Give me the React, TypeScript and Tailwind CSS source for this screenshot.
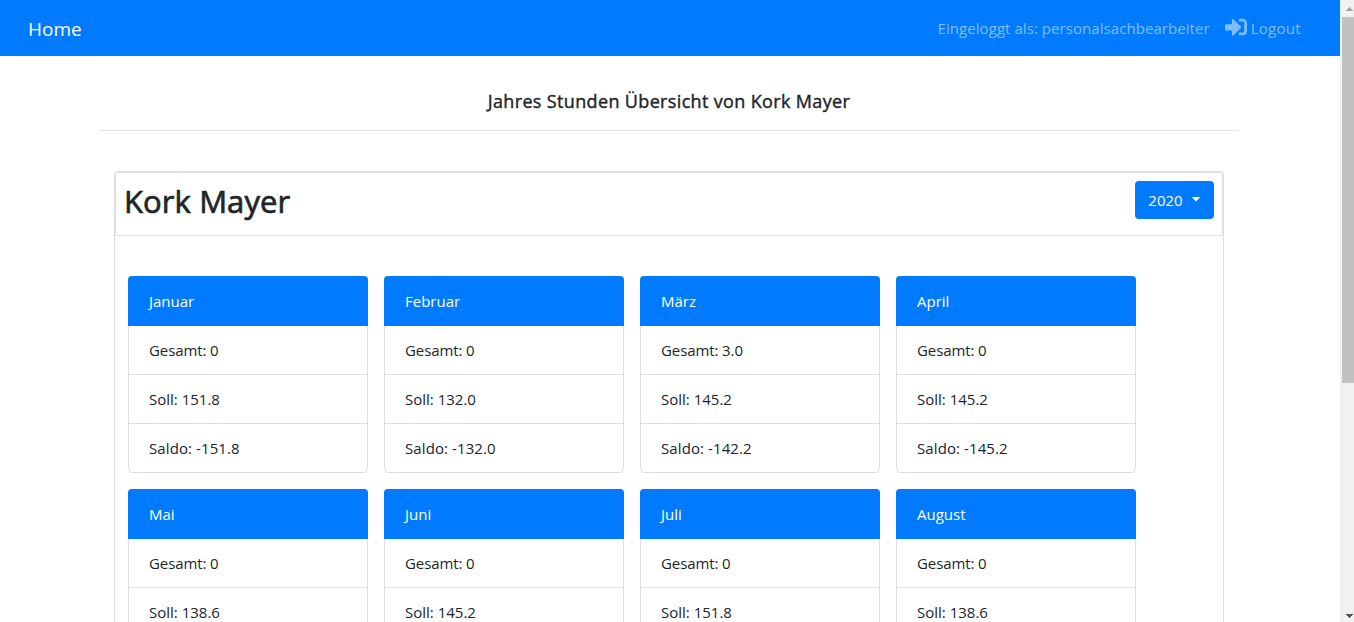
import { FaSignInAlt } from "react-icons/fa";

type Month = { name: string; total: string; target: string; balance: string };

const months: Month[] = [
  { name: "Januar", total: "0", target: "151.8", balance: "-151.8" },
  { name: "Februar", total: "0", target: "132.0", balance: "-132.0" },
  { name: "März", total: "3.0", target: "145.2", balance: "-142.2" },
  { name: "April", total: "0", target: "145.2", balance: "-145.2" },
  { name: "Mai", total: "0", target: "138.6", balance: "-138.6" },
  { name: "Juni", total: "0", target: "145.2", balance: "-145.2" },
  { name: "Juli", total: "0", target: "151.8", balance: "-151.8" },
  { name: "August", total: "0", target: "138.6", balance: "-138.6" },
];

function Navbar() {
  return (
    <nav className="flex h-14 items-center justify-between bg-[#007bff] pr-[39px] pl-7">
      <a className="pt-px text-[19px] leading-[30px] text-white" href="#">
        Home
      </a>
      <div className="flex items-center text-[15px] leading-6 text-white/50">
        <span className="mr-[15px] tracking-[0.06px]">Eingeloggt als: personalsachbearbeiter</span>
        <a className="flex items-center gap-1" href="#">
          <FaSignInAlt className="mb-0.5 size-[22px]" />
          <span className="tracking-[0.3px]">Logout</span>
        </a>
      </div>
    </nav>
  );
}

function MonthCard({ month }: { month: Month }) {
  return (
    <section className="h-[197px] w-60 rounded border border-[#dfdfdf] text-[15px] leading-6 text-[#212529]">
      <h2 className="-mx-px -mt-px h-[50px] rounded-t bg-[#007bff] px-[21px] py-[13px] text-white">{month.name}</h2>
      <ul className="divide-y divide-[#dfdfdf]">
        <li className="px-5 py-3 tracking-[-0.1px]">Gesamt: {month.total}</li>
        <li className="px-5 py-3">Soll: {month.target}</li>
        <li className="px-5 py-3 tracking-[0.1px]">Saldo: {month.balance}</li>
      </ul>
    </section>
  );
}

function Scrollbar() {
  return (
    <div className="flex h-full w-3.5 shrink-0 flex-col items-end bg-[#f1f1f1]">
      <div className="flex h-[17px] w-3 items-center justify-center pl-0.5">
        <svg width="7" height="4" viewBox="0 0 7 4" fill="#a3a3a3" shapeRendering="crispEdges">
          <path d="M3 0h1v1h1v1h1v1h1v1H0V3h1V2h1V1h1z" />
        </svg>
      </div>
      <div className="h-[366px] w-3 bg-[#c1c1c1]" />
      <div className="mt-auto flex h-[13px] w-3 items-center justify-center pt-px pl-0.5">
        <svg width="7" height="4" viewBox="0 0 7 4" fill="#505050" shapeRendering="crispEdges">
          <path d="M0 0h7v1H6v1H5v1H4v1H3V3H2V2H1V1H0z" />
        </svg>
      </div>
    </div>
  );
}

export default function App() {
  return (
    <div className="flex h-[622px] w-[1354px] overflow-hidden bg-white font-['Open_Sans','Noto_Sans',sans-serif] text-[#212529]">
      <div className="min-w-0 flex-1">
        <Navbar />
        <main className="ml-[99px] w-[1140px]">
          <h1 className="flex h-[75px] items-center justify-center border-b border-[#e5e5e5] pt-4 text-[18px] leading-6 tracking-[0.35px] [-webkit-text-stroke:0.4px]">
            Jahres Stunden Übersicht von Kork Mayer
          </h1>
          <div className="mx-[15px] mt-10 h-[700px] rounded border border-[#dfdfdf]">
            <header className="flex h-16 items-start justify-between rounded-t-[3px] border border-[#dfdfdf] p-2">
              <h2 className="text-[31px] leading-10 tracking-[0.1px] [-webkit-text-stroke:0.7px]">Kork Mayer</h2>
              <button className="flex h-[38px] w-[79px] items-center justify-center gap-2 rounded bg-[#007bff] text-[15px] leading-6 text-white">
                <span>2020</span>
                <svg width="10" height="5" viewBox="0 0 10 5" fill="currentColor" className="mb-px">
                  <path d="M0.7 0h8.6L5 4.5z" />
                </svg>
              </button>
            </header>
            <div className="mt-10 ml-[13px] grid w-[1008px] grid-cols-4 gap-4">
              {months.map((month) => (
                <MonthCard key={month.name} month={month} />
              ))}
            </div>
          </div>
        </main>
      </div>
      <Scrollbar />
    </div>
  );
}
